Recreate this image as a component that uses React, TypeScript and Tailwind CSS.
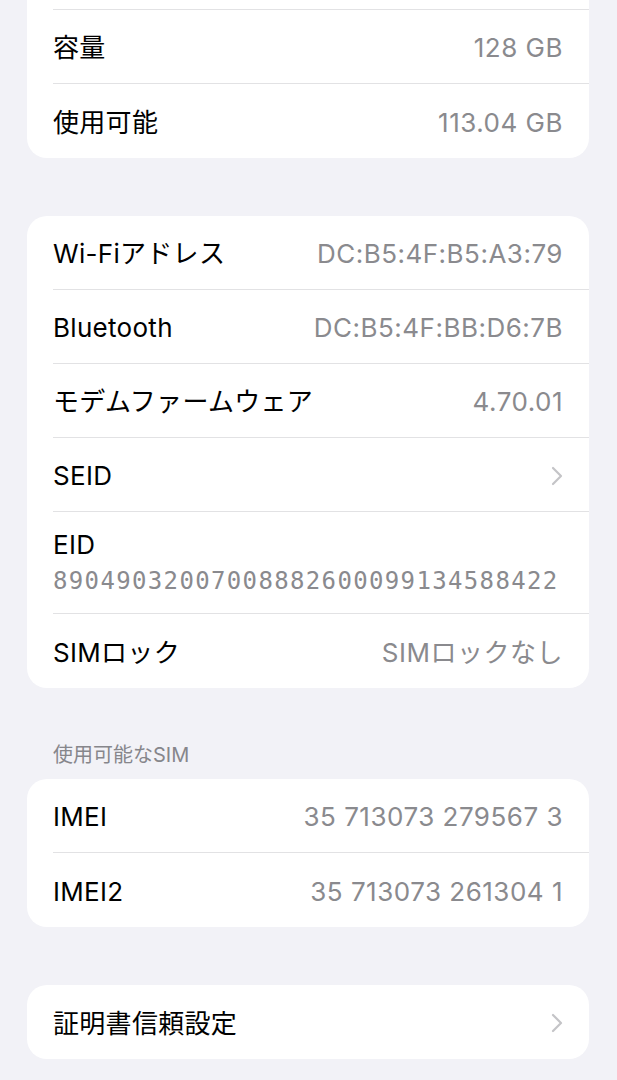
import React from 'react'

const font = { fontFamily: 'Inter, "Noto Sans CJK JP", sans-serif' }

type Item = { label: string; value?: string; chevron?: boolean }

function Chevron() {
  return (
    <svg width="12" height="20" viewBox="0 0 12 20" fill="none" className="shrink-0">
      <path d="M2 2 L10 10 L2 18" stroke="#c4c4c7" strokeWidth="2.2" strokeLinecap="round" strokeLinejoin="round" />
    </svg>
  )
}

function Row({ item, last }: { item: Item; last?: boolean }) {
  return (
    <div className="flex pl-[26px]">
      <div
        className={`flex-1 h-[74px] flex items-center justify-between pr-[26px] pt-[2px] ${last ? '' : 'border-b border-[#e2e2e4]'}`}
      >
        <span className="text-[26px] text-black tracking-[0.3px]">{item.label}</span>
        {item.value && <span className="text-[26px] text-[#8a8a8e] tracking-[0.5px]">{item.value}</span>}
        {item.chevron && <Chevron />}
      </div>
    </div>
  )
}

function Card({ children, className = '' }: { children: React.ReactNode; className?: string }) {
  return <div className={`ml-[27px] mr-[28px] bg-white rounded-[20px] overflow-hidden ${className}`}>{children}</div>
}

export default function App() {
  return (
    <div className="min-h-[1080px] bg-[#f2f2f7] overflow-hidden" style={font}>
      <Card className="rounded-t-none">
        <div className="flex pl-[26px]">
          <div className="flex-1 h-[10px] border-b border-[#e2e2e4]" />
        </div>
        <Row item={{ label: '容量', value: '128 GB' }} />
        <Row item={{ label: '使用可能', value: '113.04 GB' }} last />
      </Card>

      <Card className="mt-[58px]">
        <Row item={{ label: 'Wi-Fiアドレス', value: 'DC:B5:4F:B5:A3:79' }} />
        <Row item={{ label: 'Bluetooth', value: 'DC:B5:4F:BB:D6:7B' }} />
        <Row item={{ label: 'モデムファームウェア', value: '4.70.01' }} />
        <Row item={{ label: 'SEID', chevron: true }} />
        <div className="flex pl-[26px]">
          <div className="flex-1 h-[102px] flex flex-col justify-center pr-[26px] border-b border-[#e2e2e4]">
            <span className="text-[26px] leading-[32px] text-black tracking-[0.3px]">EID</span>
            <span
              className="text-[24px] leading-[32px] mt-[4px] text-[#8a8a8e] tracking-[1.35px]"
              style={{ fontFamily: '"DejaVu Sans Mono", monospace' }}
            >
              89049032007008882600099134588422
            </span>
          </div>
        </div>
        <Row item={{ label: 'SIMロック', value: 'SIMロックなし' }} last />
      </Card>

      <div className="pl-[53px] pt-[55px] pb-[12px] text-[20px] leading-[24px] text-[#86868b]">使用可能なSIM</div>

      <Card>
        <Row item={{ label: 'IMEI', value: '35 713073 279567 3' }} />
        <Row item={{ label: 'IMEI2', value: '35 713073 261304 1' }} last />
      </Card>

      <Card className="mt-[58px]">
        <Row item={{ label: '証明書信頼設定', chevron: true }} last />
      </Card>
    </div>
  )
}
